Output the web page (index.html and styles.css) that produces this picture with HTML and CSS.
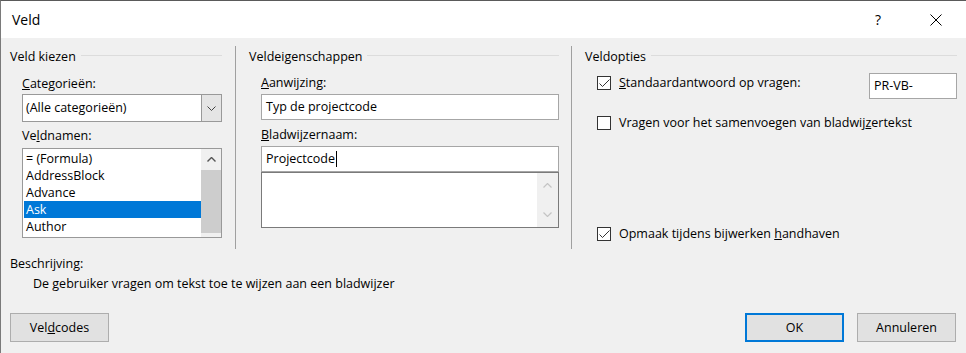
FILE: index.html
```html
<html>
<head>
<title>Veld</title>
<link rel="stylesheet" href="styles.css">
</head>
<body>
<div class="window">

<div class="titlebar">
	<div class="title">Veld</div>
	<div class="tbtn">?</div>
	<div class="tbtn">
		<svg width="12" height="12" viewBox="0 0 12 12"><path d="M0.5 0.5 L11.5 11.5 M11.5 0.5 L0.5 11.5" stroke="#000" stroke-width="1" fill="none"/></svg>
	</div>
</div>

<div class="client">
	<div class="groups">

		<div class="col col1">
			<div class="grouphead"><span>Veld kiezen</span></div>
			<div class="colbody">
				<div class="lbl first"><u>C</u>ategorieën:</div>
				<div class="combo">
					<div class="combotext">(Alle categorieën)</div>
					<div class="combobtn">
						<svg width="9" height="5" viewBox="0 0 9 5"><path d="M0.5 0.5 L4.5 4.5 L8.5 0.5" stroke="#444" fill="none"/></svg>
					</div>
				</div>
				<div class="lbl second">Ve<u>l</u>dnamen:</div>
				<div class="listbox">
					<div class="items">
						<div class="item">= (Formula)</div>
						<div class="item">AddressBlock</div>
						<div class="item">Advance</div>
						<div class="item sel">Ask</div>
						<div class="item">Author</div>
					</div>
					<div class="vscroll">
						<div class="arrow">
							<svg width="9" height="5" viewBox="0 0 9 5"><path d="M0.5 4.5 L4.5 0.5 L8.5 4.5" stroke="#555" stroke-width="1.4" fill="none"/></svg>
						</div>
						<div class="thumb"></div>
					</div>
				</div>
			</div>
		</div>

		<div class="sep"></div>

		<div class="col col2">
			<div class="grouphead"><span>Veldeigenschappen</span></div>
			<div class="colbody">
				<div class="lbl first"><u>A</u>anwijzing:</div>
				<div class="field">Typ de projectcode</div>
				<div class="lbl second"><u>B</u>ladwijzernaam:</div>
				<div class="field">Projectcode<span class="caret"></span></div>
				<div class="memo">
					<div class="memotext"></div>
					<div class="memoscroll">
						<svg width="9" height="5" viewBox="0 0 9 5"><path d="M0.5 4.5 L4.5 0.5 L8.5 4.5" stroke="#c4c4c4" stroke-width="1.2" fill="none"/></svg>
						<svg width="9" height="5" viewBox="0 0 9 5"><path d="M0.5 0.5 L4.5 4.5 L8.5 0.5" stroke="#c4c4c4" stroke-width="1.2" fill="none"/></svg>
					</div>
				</div>
			</div>
		</div>

		<div class="sep"></div>

		<div class="col col3">
			<div class="grouphead"><span>Veldopties</span></div>
			<div class="colbody">
				<div class="opt opt1">
					<div class="check on">
						<svg width="11" height="9" viewBox="0 0 11 9"><path d="M0.5 4.5 L3.5 7.5 L10.5 0.5" stroke="#333" stroke-width="1" fill="none"/></svg>
					</div>
					<div class="optlbl"><u>S</u>tandaardantwoord op vragen:</div>
					<div class="field small">PR-VB-</div>
				</div>
				<div class="opt opt2">
					<div class="check"></div>
					<div class="optlbl">Vragen voor het samenvoegen van bladwij<u>z</u>ertekst</div>
				</div>
				<div class="opt opt3">
					<div class="check on">
						<svg width="11" height="9" viewBox="0 0 11 9"><path d="M0.5 4.5 L3.5 7.5 L10.5 0.5" stroke="#333" stroke-width="1" fill="none"/></svg>
					</div>
					<div class="optlbl">Opmaak tijdens bijwerken <u>h</u>andhaven</div>
				</div>
			</div>
		</div>

	</div>

	<div class="desc">
		<div class="desclbl">Beschrijving:</div>
		<div class="desctext">De gebruiker vragen om tekst toe te wijzen aan een bladwijzer</div>
	</div>

	<div class="buttons">
		<div class="btn">Vel<u>d</u>codes</div>
		<div class="spacer"></div>
		<div class="btn default">OK</div>
		<div class="btn">Annuleren</div>
	</div>
</div>

</div>
</body>
</html>
```

FILE: styles.css
```css
* {
	box-sizing: border-box;
}

body {
	margin: 0;
	padding: 0;
	background-color: #f0f0f0;
	font-family: "Open Sans", "Liberation Sans", sans-serif;
	font-size: 12.5px;
	color: #000;
}

.window {
	width: 966px;
	height: 353px;
	border-left: 1px solid #7a7a7a;
	border-top: 1px solid #5a5a5a;
	display: flex;
	flex-direction: column;
	overflow: hidden;
}

.titlebar {
	height: 37px;
	background-color: #fff;
	display: flex;
	align-items: center;
	padding-left: 11px;
	padding-right: 7px;
}

.title {
	flex: 1;
	font-size: 14px;
}

.tbtn {
	width: 46px;
	height: 37px;
	display: flex;
	align-items: center;
	justify-content: center;
	font-size: 14px;
	margin-left: 12px;
}

.client {
	flex: 1;
	padding: 0 9px;
	display: flex;
	flex-direction: column;
}

.groups {
	display: flex;
	margin-top: 8px;
	height: 203px;
}

.sep {
	width: 1px;
	background-color: #a0a0a0;
}

.col {
	padding-top: 3px;
}

.col1 {
	width: 225px;
	padding-right: 13px;
}

.col2 {
	width: 335px;
	padding-left: 13px;
	padding-right: 12px;
}

.col3 {
	flex: 1;
	padding-left: 13px;
}

.grouphead {
	display: flex;
	height: 16px;
	line-height: 16px;
}

.grouphead::after {
	content: "";
	flex: 1;
	height: 1px;
	background-color: #dcdcdc;
	margin-top: 6px;
	margin-left: 5px;
}

.colbody {
	padding-left: 12px;
}

.lbl {
	height: 16px;
	line-height: 16px;
}

.col1 .lbl.first {
	margin-top: 11px;
}

.col1 .lbl.second {
	margin-top: 6px;
}

.combo {
	margin-top: 2px;
	height: 28px;
	border: 1px solid #999;
	background-color: #fff;
	display: flex;
}

.combotext {
	flex: 1;
	padding-left: 3px;
	line-height: 26px;
}

.combobtn {
	width: 20px;
	background-color: #e5e5e5;
	border-left: 1px solid #999;
	display: flex;
	align-items: center;
	justify-content: center;
}

.listbox {
	margin-top: 4px;
	height: 90px;
	border: 1px solid #999;
	background-color: #fff;
	display: flex;
}

.items {
	flex: 1;
	padding: 1px 0 0 1px;
}

.item {
	height: 17px;
	line-height: 17px;
	padding-left: 2px;
}

.item.sel {
	background-color: #0078d7;
	color: #fff;
}

.vscroll {
	width: 20px;
	background-color: #f0f0f0;
	display: flex;
	flex-direction: column;
	padding-bottom: 4px;
}

.arrow {
	height: 21px;
	display: flex;
	align-items: center;
	justify-content: center;
}

.thumb {
	flex: 1;
	background-color: #cdcdcd;
}

.col2 .lbl.first {
	margin-top: 10px;
}

.col2 .lbl.second {
	margin-top: 7px;
}

.field {
	margin-top: 3px;
	height: 26px;
	border: 1px solid #a6a6a6;
	background-color: #fff;
	line-height: 24px;
	padding-left: 4px;
	display: flex;
	align-items: center;
}

.caret {
	display: inline-block;
	width: 1px;
	height: 16px;
	background-color: #000;
	margin-left: 1px;
}

.memo {
	height: 56px;
	border: 1px solid #7a7a7a;
	background-color: #fff;
	display: flex;
}

.memotext {
	flex: 1;
}

.memoscroll {
	width: 21px;
	background-color: #f0f0f0;
	display: flex;
	flex-direction: column;
	align-items: center;
	justify-content: space-between;
	padding: 10px 0 10px 0;
}

.opt {
	display: flex;
	align-items: flex-start;
}

.opt1 {
	margin-top: 8px;
}

.opt2 {
	margin-top: 16px;
}

.opt3 {
	margin-top: 95px;
}

.check {
	width: 14px;
	height: 14px;
	border: 1px solid #333;
	background-color: #fff;
	display: flex;
	align-items: center;
	justify-content: center;
	margin-top: 1px;
}

.opt1 .check {
	margin-top: 3px;
}

.optlbl {
	margin-left: 8px;
	height: 16px;
	line-height: 16px;
}

.opt1 .optlbl {
	margin-top: 2px;
}

.field.small {
	margin-top: 0;
	margin-left: auto;
	width: 88px;
}

.desc {
	margin-top: 7px;
}

.desclbl {
	height: 16px;
	line-height: 16px;
}

.desctext {
	margin-top: 4px;
	padding-left: 23px;
	height: 16px;
	line-height: 16px;
}

.buttons {
	margin-top: 21px;
	display: flex;
	padding-right: 1px;
}

.spacer {
	flex: 1;
}

.btn {
	width: 99px;
	height: 29px;
	background-color: #e1e1e1;
	border: 1px solid #adadad;
	display: flex;
	align-items: center;
	justify-content: center;
	margin-left: 13px;
}

.btn:first-child {
	margin-left: 0;
}

.btn.default {
	border: 2px solid #0078d7;
}
```
